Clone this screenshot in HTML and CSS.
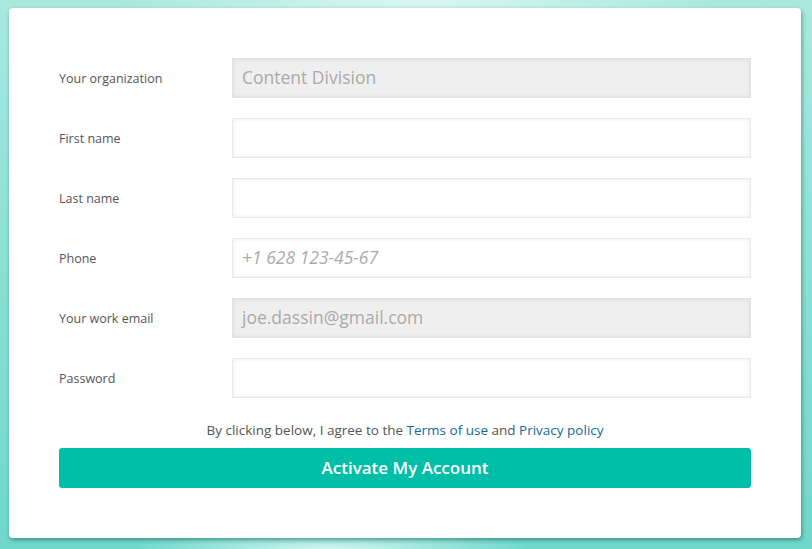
FILE: index.html
```html
<!DOCTYPE html>
<html>
<head>
<meta charset="utf-8">
<link rel="stylesheet" href="styles.css">
</head>
<body>
<div class="card">
  <form class="form">
    <div class="row">
      <label class="label">Your organization</label>
      <div class="field disabled">Content Division</div>
    </div>
    <div class="row">
      <label class="label">First name</label>
      <div class="field"></div>
    </div>
    <div class="row">
      <label class="label">Last name</label>
      <div class="field"></div>
    </div>
    <div class="row">
      <label class="label">Phone</label>
      <div class="field placeholder">+1 628 123-45-67</div>
    </div>
    <div class="row">
      <label class="label">Your work email</label>
      <div class="field disabled">joe.dassin@gmail.com</div>
    </div>
    <div class="row">
      <label class="label">Password</label>
      <div class="field"></div>
    </div>
    <p class="terms">By clicking below, I agree to the <a class="link">Terms of use</a> and <a class="link">Privacy policy</a></p>
    <div class="button">Activate My Account</div>
  </form>
</div>
</body>
</html>
```

FILE: styles.css
```css
html, body {
  margin: 0;
  padding: 0;
}
body {
  width: 812px;
  height: 549px;
  overflow: hidden;
  font-family: "Open Sans", "Noto Sans", sans-serif;
  background:
    radial-gradient(ellipse 300px 40px at 420px 0px, rgba(230,250,246,0.8), rgba(230,250,246,0) 100%),
    radial-gradient(ellipse 200px 20px at 330px 549px, rgba(220,250,245,0.9), rgba(220,250,245,0) 100%),
    linear-gradient(180deg, #a9e9e0 0%, #8fe2d7 40%, #6fd8cb 100%);
  padding-top: 8px;
  padding-left: 9px;
  box-sizing: border-box;
}
.card {
  width: 792px;
  height: 530px;
  box-sizing: border-box;
  background: #fff;
  border-radius: 4px;
  box-shadow: 1px 2px 4px rgba(0, 60, 50, 0.45);
  padding: 50px 50px 0 50px;
}
.form {
  display: flex;
  flex-direction: column;
  gap: 20px;
  margin: 0;
}
.row {
  display: flex;
  align-items: center;
  height: 40px;
}
.label {
  width: 173px;
  font-size: 12.5px;
  color: #555;
}
.field {
  flex: 1;
  height: 40px;
  box-sizing: border-box;
  border: 1px solid #e9e9e9;
  box-shadow: inset 0 0 4px rgba(0, 0, 0, 0.09);
  background: #fff;
  font-size: 17.5px;
  color: #aaa;
  padding: 0 9px;
  display: flex;
  align-items: center;
  padding-bottom: 3px;
}
.field.disabled {
  background: #efefef;
  border-color: #e2e2e2;
}
.field.placeholder {
  font-style: italic;
}
.terms {
  margin: 0;
  margin-top: 2px;
  text-align: center;
  font-size: 13.5px;
  line-height: 20px;
  color: #555;
}
.link {
  color: #0f6b9c;
  text-decoration: none;
}
.button {
  margin-top: -12px;
  height: 40px;
  background: #00bfa8;
  border-radius: 3px;
  color: #fff;
  font-size: 17px;
  font-weight: 600;
  display: flex;
  align-items: center;
  justify-content: center;
  padding-bottom: 2px;
  box-sizing: border-box;
}
```
